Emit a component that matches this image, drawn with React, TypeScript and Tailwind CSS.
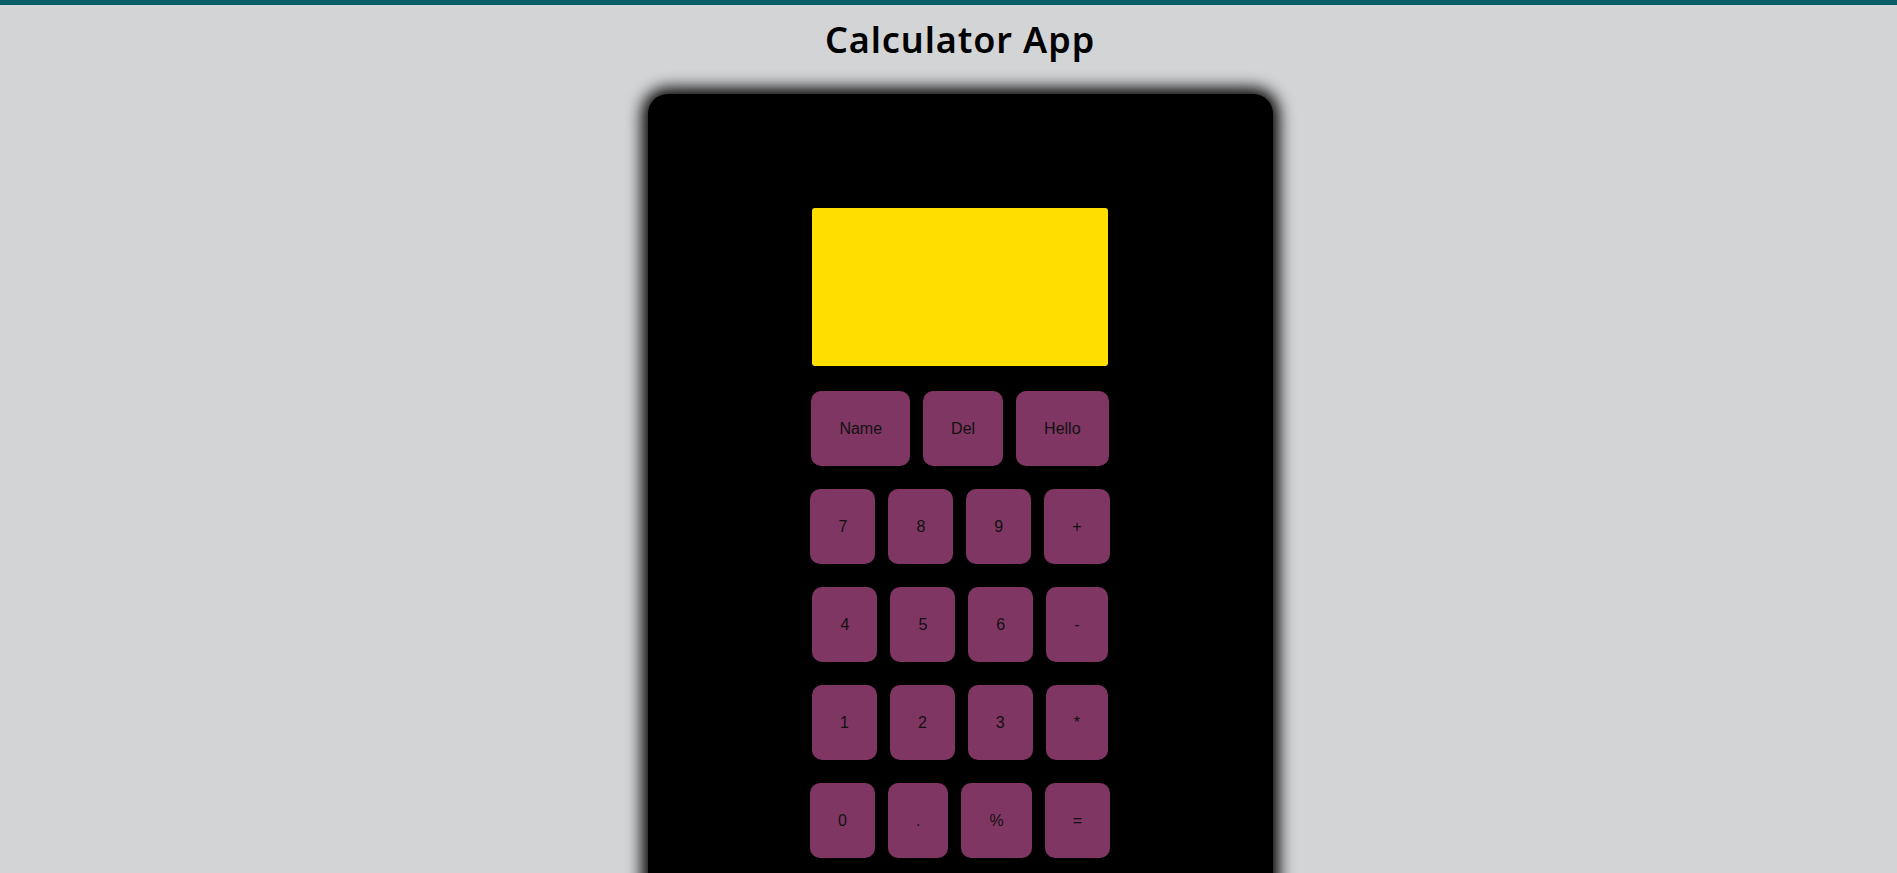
const ROWS: string[][] = [
  ['Name', 'Del', 'Hello'],
  ['7', '8', '9', '+'],
  ['4', '5', '6', '-'],
  ['1', '2', '3', '*'],
  ['0', '.', '%', '='],
]

function Key({ label }: { label: string }) {
  return (
    <button className="h-[75px] px-[28px] rounded-[10px] bg-[#7f3663] text-[16px] leading-[18px] text-[#111] font-['Liberation_Sans',Arial,sans-serif]">
      {label}
    </button>
  )
}

export default function App() {
  return (
    <div className="h-screen overflow-hidden bg-[#d3d4d6]">
      <div className="w-[1920px] flex flex-col items-center">
        {/* Top bar */}
        <div className="h-[5px] w-full bg-[#075e67]" />

        <h1 className="mt-[17px] text-[36px] leading-[36px] font-semibold tracking-[0.9px] text-black font-['Noto_Sans',sans-serif]">
          Calculator App
        </h1>

        {/* Calculator body */}
        <div className="mt-[36px] w-[625px] rounded-[20px] bg-black pt-[114px] pb-[80px] flex flex-col items-center shadow-[0_0_16px_6px_rgba(0,0,0,1)]">
          <div className="w-[296px] h-[158px] rounded-[3px] bg-[#ffde00]" />

          <div className="mt-[25px] flex flex-col items-center gap-[23px]">
            {ROWS.map((row, i) => (
              <div key={i} className="flex gap-[13px]">
                {row.map(k => (
                  <Key key={k} label={k} />
                ))}
              </div>
            ))}
          </div>
        </div>
      </div>
    </div>
  )
}
